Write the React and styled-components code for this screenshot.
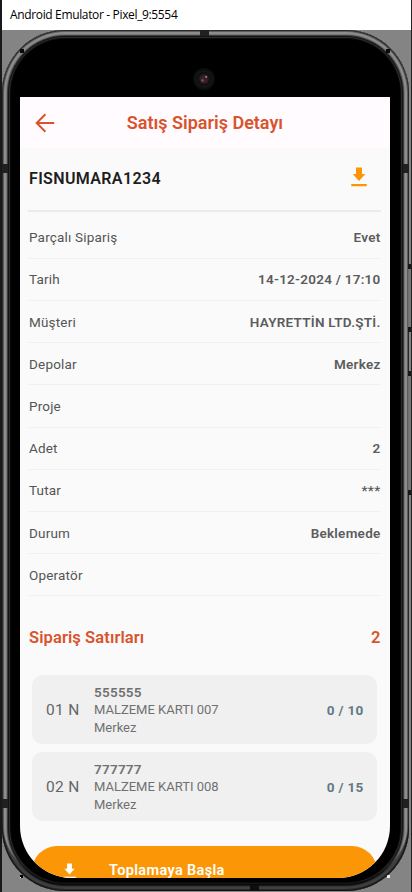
import React from 'react'
import styled, { createGlobalStyle } from 'styled-components'

const colors = {
  primary: '#d9532c',
  orange: '#fb9706',
  text: '#5c5c5c',
  label: '#555555',
  slate: '#627985'
}

const rows = [
  { label: 'Parçalı Sipariş', value: 'Evet' },
  { label: 'Tarih', value: '14-12-2024 / 17:10' },
  { label: 'Müşteri', value: 'HAYRETTİN LTD.ŞTİ.' },
  { label: 'Depolar', value: 'Merkez' },
  { label: 'Proje', value: '' },
  { label: 'Adet', value: '2' },
  { label: 'Tutar', value: '***' },
  { label: 'Durum', value: 'Beklemede' },
  { label: 'Operatör', value: '' }
]

const lines = [
  { no: '01 N', code: '555555', name: 'MALZEME KARTI 007', store: 'Merkez', qty: '0 / 10' },
  { no: '02 N', code: '777777', name: 'MALZEME KARTI 008', store: 'Merkez', qty: '0 / 15' }
]

const GlobalStyle = createGlobalStyle`
  *, *::before, *::after { box-sizing: border-box; }

  body {
    margin: 0;
    overflow: hidden;
    background: #848484;
    font-family: Roboto, 'Liberation Sans', sans-serif;
  }
`

const Window = styled.div`
  width: 412px;
  height: 892px;
  display: flex;
  flex-direction: column;
  overflow: hidden;
  background: #848484;
  border-left: 2px solid #19191b;
  border-right: 1px solid #222225;
`

const TitleBar = styled.div`
  height: 30px;
  flex-shrink: 0;
  padding-left: 8px;
  background: #fff;
  color: #000;
  font: 12px/30px 'Open Sans', 'Noto Sans', sans-serif;
  letter-spacing: -0.35px;
  white-space: nowrap;
`

/* Metal frame: nested rings from the outer edge to the glass. */
const Phone = styled.div`
  position: relative;
  width: 407px;
  height: 861px;
  flex-shrink: 0;
  padding: 67px 19px 13px 18px;
  border-radius: 63px;
  background: #000;
  box-shadow:
    inset 0 0 0 1px #2c2c2c,
    inset 0 0 0 2px #5c5c5c,
    inset 0 0 0 4px #8d8d8d,
    inset 0 0 0 5px #777,
    inset 0 0 0 6px #3b3b3b,
    inset 0 0 0 7px #141414,
    inset 0 0 0 8px #2c2c2c,
    inset 0 0 0 9px #0a0a0a;

  /* The lower edge of the frame is in shadow. */
  &::after {
    content: '';
    position: absolute;
    inset: 0;
    border-radius: inherit;
    box-shadow: inset 0 -8px 1px rgba(0, 0, 0, 0.55);
    pointer-events: none;
  }
`

/* Antenna breaks in the frame. */
const Notch = styled.i`
  position: absolute;
  background: #202020;
  top: ${({ $top }) => $top}px;
  left: ${({ $left }) => $left}px;
  width: ${({ $tall }) => ($tall ? 6 : 9)}px;
  height: ${({ $tall }) => ($tall ? 9 : 6)}px;
`

/* Power and volume keys on the right side. */
const SideKey = styled.i`
  position: absolute;
  top: ${({ $top }) => $top}px;
  left: 406px;
  width: 3px;
  height: ${({ $height }) => $height}px;
  background: #777;
  border: solid #181818;
  border-width: 5px 0;
`

const Corner = styled.i`
  position: absolute;
  top: ${({ $top }) => $top}px;
  left: ${({ $left }) => $left}px;
  width: ${({ $size }) => $size}px;
  height: ${({ $size }) => $size}px;
  background: ${({ $color }) => $color};
`

const Camera = styled.span`
  position: absolute;
  top: 38px;
  left: 191px;
  width: 22px;
  height: 22px;
  border-radius: 50%;
  border: 2px solid #0c0e0d;
  background:
    radial-gradient(circle at 62% 38%, #8f8288 0 0.5px, transparent 1.5px),
    radial-gradient(circle at 42% 58%, #6f5560 0 0.5px, transparent 2px),
    radial-gradient(circle at 58% 58%, #4a1520 0 1px, transparent 3px),
    radial-gradient(circle, #32232a 0 3px, #1d1518 5px, #0c0c0c 6px, #151716 8px);
`

const Screen = styled.div`
  height: 781px;
  overflow: hidden;
  border-radius: 1px 1px 52px 52px;
  background: #fafafa;
  color: ${colors.text};
`

const AppBar = styled.header`
  height: 51px;
  display: grid;
  grid-template-columns: 50px 1fr 50px;
  align-items: center;
  background: #fffbff;
  color: ${colors.primary};
`

const BackIcon = styled.svg`
  width: 20px;
  height: 20px;
  margin-left: 15px;
`

const Title = styled.h1`
  margin: 0;
  text-align: center;
  font-size: 18px;
  line-height: 20px;
  font-weight: 600;
  white-space: nowrap;
`

const Content = styled.main`
  padding: 0 9px 0 8px;
`

const DocHeader = styled.div`
  height: 64px;
  display: flex;
  align-items: flex-start;
  justify-content: space-between;
  padding: 19px 14px 0 1px;
  border-bottom: 2px solid #ebebeb;
`

const DocNumber = styled.h2`
  margin: 2px 0 0;
  color: #1e1e1e;
  font-size: 16px;
  line-height: 20px;
  font-weight: 600;
  letter-spacing: 0.36px;
`

const DownloadIcon = styled.svg`
  display: block;
  width: ${({ $size }) => $size}px;
  height: ${({ $size }) => $size * 1.25}px;
  fill: currentColor;
  flex-shrink: 0;
`

const HeaderAction = styled.span`
  color: ${colors.orange};
`

const Details = styled.div`
  padding-top: 4.7px;
`

const DetailRow = styled.div`
  height: 42.2px;
  display: flex;
  align-items: center;
  justify-content: space-between;
  padding: 0 0.5px 0 1px;
  border-bottom: 1px solid #f1f1f1;
  font-size: 13.5px;
  letter-spacing: 0.18px;
`

const Label = styled.span`
  color: ${colors.label};
`

const Value = styled.span`
  color: ${colors.text};
  font-weight: 600;
  letter-spacing: 0.25px;
`

const SectionHeader = styled.div`
  display: flex;
  justify-content: space-between;
  margin-top: 31px;
  padding: 0 0.5px 0 1px;
  color: ${colors.primary};
  font-size: 16.5px;
  line-height: 22px;
  font-weight: 600;
  letter-spacing: 0.1px;
`

const Lines = styled.div`
  display: flex;
  flex-direction: column;
  gap: 8px;
  padding: 25.8px 4px 0;
`

const LineCard = styled.div`
  height: 69px;
  display: grid;
  grid-template-columns: 48px 1fr auto;
  align-items: center;
  padding: 1px 13.5px 0 14px;
  border-radius: 11px;
  background: #f0f0f0;
`

const LineNo = styled.span`
  font-size: 15.5px;
  letter-spacing: 0.3px;
  color: #666;
`

const LineBody = styled.div`
  color: #707070;
  font-size: 13px;
  line-height: 18.3px;
`

const Code = styled.div`
  font-size: 13.5px;
  font-weight: 600;
  letter-spacing: 0.25px;
`

const Quantity = styled.span`
  color: ${colors.slate};
  font-size: 13.5px;
  font-weight: 700;
  letter-spacing: 0.3px;
`

const StartButton = styled.button`
  display: flex;
  align-items: center;
  width: 345px;
  height: 50px;
  margin: 25px 4px 0;
  padding: 0 0 0 31px;
  border: 0;
  border-radius: 25px;
  background: ${colors.orange};
  color: #fff;
  font: 600 14.5px/20px Roboto, sans-serif;
  letter-spacing: 0.35px;
`

const ButtonText = styled.span`
  margin-left: 33px;
`

const Download = ({ size }) => (
  <DownloadIcon $size={size} viewBox='0 0 16 20'>
    <path d='M5 0.5h6v6.5h3.3L8 14 1.7 7H5z' />
    <path d='M0.3 17h15.4v2.2H0.3z' />
  </DownloadIcon>
)

const App = () => (
  <>
    <GlobalStyle />
    <Window>
      <TitleBar>Android Emulator - Pixel_9:5554</TitleBar>
      <Phone>
        <Notch $top={0} $left={198} />
        <Notch $top={134} $left={0} $tall />
        <Notch $top={134} $left={401} $tall />
        <Notch $top={769} $left={0} $tall />
        <Notch $top={769} $left={401} $tall />
        <Notch $top={855} $left={248} />
        <SideKey $top={234} $height={68} />
        <SideKey $top={341} $height={124} />
        <Corner $top={19} $left={18} $size={4} $color='#0a0a0a' />
        <Corner $top={19} $left={384} $size={4} $color='#0a0a0a' />
        <Corner $top={845} $left={18} $size={3} $color='#000' />
        <Corner $top={847} $left={18} $size={1} $color='#eee' />
        <Corner $top={845} $left={385} $size={3} $color='#eee' />
        <Camera />
        <Screen>
          <AppBar>
            <BackIcon viewBox='0 0 20 20' fill='none' stroke='currentColor' strokeWidth='2'>
              <path d='M19.2 10H2M10.4 1.3 1.7 10l8.7 8.7' />
            </BackIcon>
            <Title>Satış Sipariş Detayı</Title>
          </AppBar>
          <Content>
            <DocHeader>
              <DocNumber>FISNUMARA1234</DocNumber>
              <HeaderAction>
                <Download size={16} />
              </HeaderAction>
            </DocHeader>
            <Details>
              {rows.map(({ label, value }) => (
                <DetailRow key={label}>
                  <Label>{label}</Label>
                  <Value>{value}</Value>
                </DetailRow>
              ))}
            </Details>
            <SectionHeader>
              <span>Sipariş Satırları</span>
              <span>2</span>
            </SectionHeader>
            <Lines>
              {lines.map(line => (
                <LineCard key={line.no}>
                  <LineNo>{line.no}</LineNo>
                  <LineBody>
                    <Code>{line.code}</Code>
                    <div>{line.name}</div>
                    <div>{line.store}</div>
                  </LineBody>
                  <Quantity>{line.qty}</Quantity>
                </LineCard>
              ))}
            </Lines>
            <StartButton>
              <Download size={13} />
              <ButtonText>Toplamaya Başla</ButtonText>
            </StartButton>
          </Content>
        </Screen>
      </Phone>
    </Window>
  </>
)

export default App
